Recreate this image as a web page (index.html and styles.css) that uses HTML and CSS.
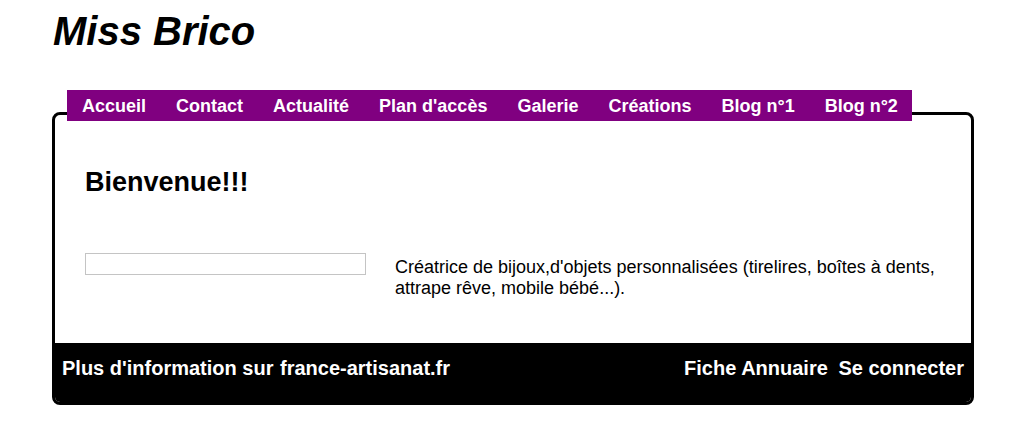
FILE: index.html
```html
<!DOCTYPE html>
<html lang="fr">
<head>
    <meta charset="UTF-8">
    <title>Miss Brico</title>
    <link rel="stylesheet" href="styles.css">
</head>
<body>
    <div class="site">
        <div class="header">
            <h1 class="site-title">Miss Brico</h1>
        </div>

        <ul class="menu">
            <li><a href="#">Accueil</a></li>
            <li><a href="#">Contact</a></li>
            <li><a href="#">Actualité</a></li>
            <li><a href="#">Plan d'accès</a></li>
            <li><a href="#">Galerie</a></li>
            <li><a href="#">Créations</a></li>
            <li><a href="#">Blog n°1</a></li>
            <li><a href="#">Blog n°2</a></li>
        </ul>

        <div class="box">
            <div class="content">
                <h2 class="welcome">Bienvenue!!!</h2>
                <div class="intro">
                    <div class="photo"></div>
                    <p class="intro-text">Créatrice de bijoux,d'objets personnalisées (tirelires, boîtes à dents, attrape rêve, mobile bébé...).</p>
                </div>
            </div>

            <div class="footer">
                <div class="footer-left">
                    <span>Plus d'information sur</span>
                    <a href="#">france-artisanat.fr</a>
                </div>
                <div class="footer-right">
                    <a href="#">Fiche Annuaire</a>
                    <a href="#">Se connecter</a>
                </div>
            </div>
        </div>
    </div>
</body>
</html>
```

FILE: styles.css
```css
* {
    margin: 0;
    padding: 0;
    box-sizing: border-box;
}

body {
    font-family: "Liberation Sans", Arial, sans-serif;
    background: white;
    color: black;
}

a {
    color: inherit;
    text-decoration: none;
}

.site {
    width: 922px;
    margin-left: 52px;
}

.header {
    padding: 8px 0 0 1px;
    height: 90px;
}

.site-title {
    font-size: 40px;
    font-weight: bold;
    font-style: italic;
    line-height: 46px;
}

.menu {
    list-style: none;
    display: flex;
    width: 845px;
    margin-left: 15px;
    height: 31px;
    background: #800080;
    position: relative;
    z-index: 1;
}

.menu li {
    flex-shrink: 0;
}

.menu a {
    display: block;
    padding: 2px 15px 0 15px;
    font-size: 18px;
    font-weight: bold;
    line-height: 29px;
    color: white;
    white-space: nowrap;
}

.box {
    margin-top: -9px;
    border: 3px solid black;
    border-radius: 8px;
    overflow: hidden;
}

.content {
    padding: 52px 30px 0 30px;
    height: 228px;
}

.welcome {
    font-size: 27px;
    font-weight: bold;
    line-height: 31px;
}

.intro {
    display: flex;
    gap: 29px;
    margin-top: 55px;
}

.photo {
    width: 281px;
    height: 22px;
    border: 1px solid #c4c4c4;
    flex-shrink: 0;
}

.intro-text {
    font-size: 18px;
    line-height: 21px;
    padding-top: 4px;
}

.footer {
    background: black;
    color: white;
    height: 59px;
    display: flex;
    justify-content: space-between;
    padding: 14px 7px 0 7px;
    font-size: 20px;
    font-weight: bold;
    line-height: 23px;
}

.footer-left span {
    margin-right: 1px;
}

.footer-right a + a {
    margin-left: 5px;
}
```
